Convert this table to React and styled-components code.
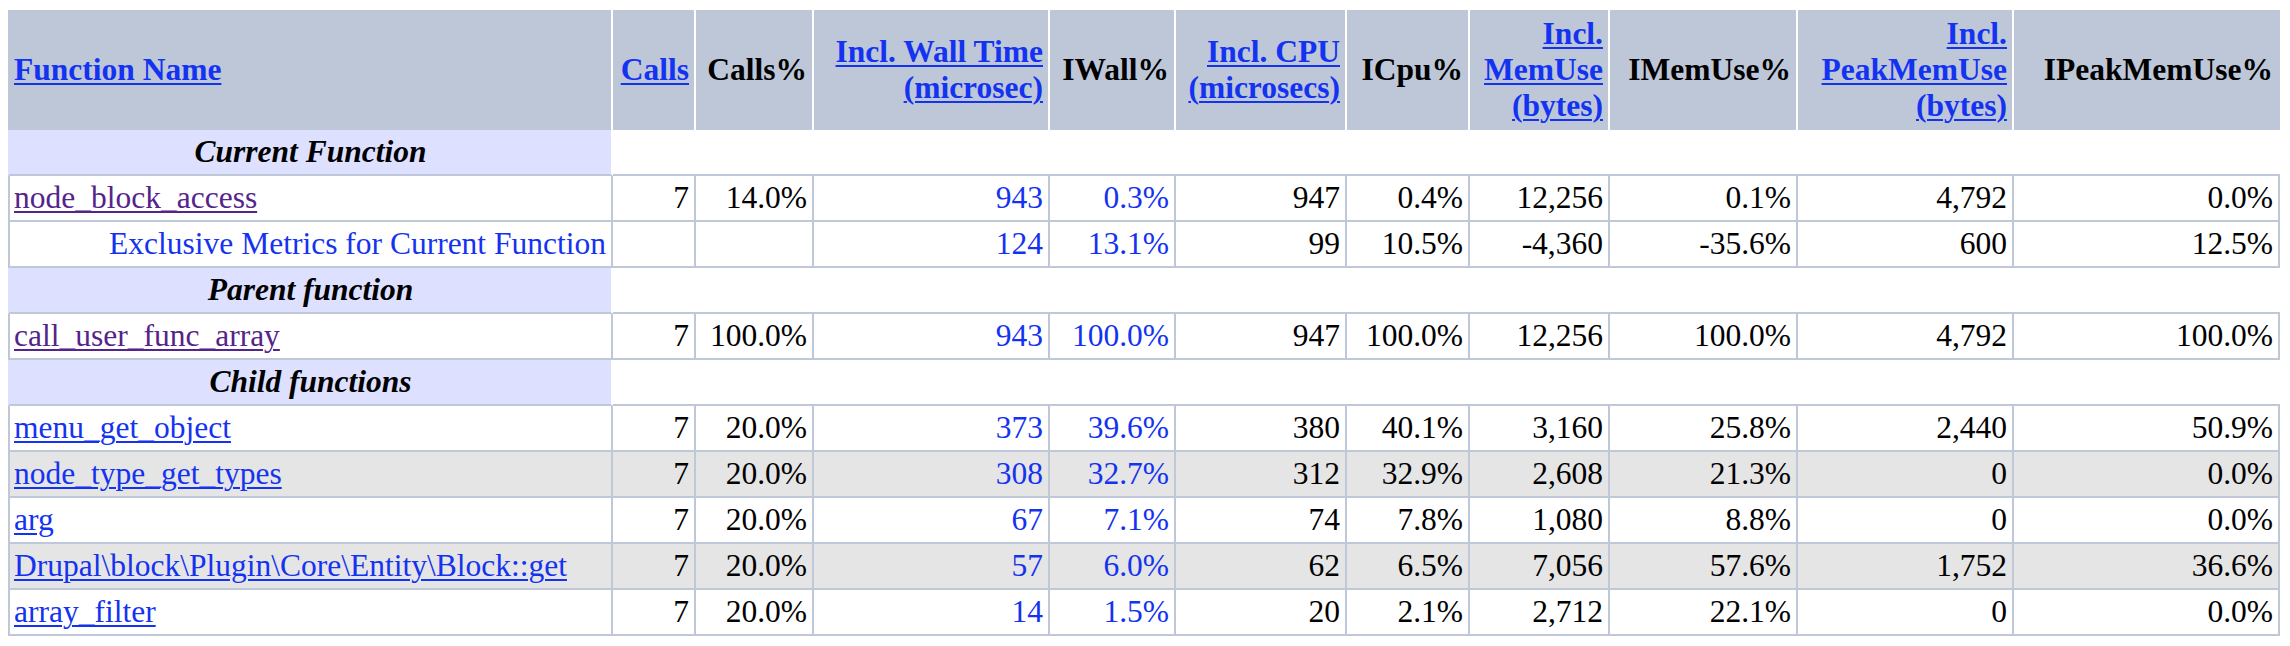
import React from 'react'
import styled, { createGlobalStyle } from 'styled-components'

const GlobalStyle = createGlobalStyle`
    body {
        margin: 0;
        background: #fff;
    }
`

const LINE = '#bfc8d9'
const HEAD = '#bdc7d8'
const SECTION = '#dde0ff'
const BLUE = '#1433f0'
const PURPLE = '#55248b'

const Table = styled.table`
    border-collapse: separate;
    border-spacing: 0;
    table-layout: fixed;
    width: 2272px;
    margin: 10px 0 0 8px;
    font-family: "Liberation Serif", "Times New Roman", serif;
    font-size: 31.5px;
    line-height: 36px;
    color: #000;
`

const HeadCell = styled.th`
    box-sizing: border-box;
    width: ${p => p.$w}px;
    height: 120px;
    padding: 4px 5px 4px 4px;
    background: ${HEAD};
    font-weight: bold;
    text-align: ${p => (p.$left ? 'left' : 'right')};
    vertical-align: middle;
    border-right: 2px solid ${p => (p.$last ? HEAD : '#fff')};
    &:first-child {
        border-left: 2px solid ${HEAD};
    }
`

const Link = styled.a`
    color: ${p => (p.$visited ? PURPLE : BLUE)};
    text-decoration: underline;
    text-decoration-thickness: 2px;
    text-underline-offset: 3px;
    cursor: pointer;
`

const Row = styled.tr`
    background: ${p => (p.$shaded ? '#e5e5e5' : '#fff')};
`

const Cell = styled.td`
    box-sizing: border-box;
    padding: 4px 5px 4px 4px;
    text-align: ${p => (p.$align || 'right')};
    color: ${p => (p.$blue ? BLUE : '#000')};
    white-space: nowrap;
    border-right: 2px solid ${LINE};
    border-bottom: 2px solid ${LINE};
    &:first-child {
        border-left: 2px solid ${LINE};
    }
`

const SectionCell = styled.td`
    padding: 4px;
    background: ${SECTION};
    text-align: center;
    font-weight: bold;
    font-style: italic;
    border-left: 2px solid ${SECTION};
    border-right: 2px solid #fff;
    border-bottom: 2px solid ${LINE};
`

const SectionRest = styled.td`
    background: #fff;
    border-bottom: 2px solid ${LINE};
`

const columns = [
    { label: 'Function Name', link: true, left: true, w: 605 },
    { label: 'Calls', link: true, w: 83 },
    { label: 'Calls%', w: 118 },
    { label: ['Incl. Wall Time', '(microsec)'], link: true, w: 236 },
    { label: 'IWall%', w: 126 },
    { label: ['Incl. CPU', '(microsecs)'], link: true, w: 171 },
    { label: 'ICpu%', w: 123 },
    { label: ['Incl.', 'MemUse', '(bytes)'], link: true, w: 140 },
    { label: 'IMemUse%', w: 188 },
    { label: ['Incl.', 'PeakMemUse', '(bytes)'], link: true, w: 216 },
    { label: 'IPeakMemUse%', w: 266 },
]

// columns 2 and 3 of the metrics (wall time) are printed in blue
const blueCols = [2, 3]

const current = {
    name: 'node_block_access',
    visited: true,
    values: ['7', '14.0%', '943', '0.3%', '947', '0.4%', '12,256', '0.1%', '4,792', '0.0%'],
}

const exclusive = ['', '', '124', '13.1%', '99', '10.5%', '-4,360', '-35.6%', '600', '12.5%']

const parents = [
    {
        name: 'call_user_func_array',
        visited: true,
        values: ['7', '100.0%', '943', '100.0%', '947', '100.0%', '12,256', '100.0%', '4,792', '100.0%'],
    },
]

const children = [
    { name: 'menu_get_object', values: ['7', '20.0%', '373', '39.6%', '380', '40.1%', '3,160', '25.8%', '2,440', '50.9%'] },
    { name: 'node_type_get_types', values: ['7', '20.0%', '308', '32.7%', '312', '32.9%', '2,608', '21.3%', '0', '0.0%'] },
    { name: 'arg', values: ['7', '20.0%', '67', '7.1%', '74', '7.8%', '1,080', '8.8%', '0', '0.0%'] },
    { name: 'Drupal\\block\\Plugin\\Core\\Entity\\Block::get', values: ['7', '20.0%', '57', '6.0%', '62', '6.5%', '7,056', '57.6%', '1,752', '36.6%'] },
    { name: 'array_filter', values: ['7', '20.0%', '14', '1.5%', '20', '2.1%', '2,712', '22.1%', '0', '0.0%'] },
]

const HeaderLabel = ({ label }) => {
    const lines = Array.isArray(label) ? label : [label]
    return lines.map((line, i) => (
        <React.Fragment key={i}>
            {i > 0 && <br />}
            {line}
        </React.Fragment>
    ))
}

const Section = ({ title }) => (
    <tr>
        <SectionCell>{title}</SectionCell>
        <SectionRest colSpan={10} />
    </tr>
)

const FuncRow = ({ fn, shaded }) => (
    <Row $shaded={shaded}>
        <Cell $align="left">
            <Link $visited={fn.visited}>{fn.name}</Link>
        </Cell>
        {fn.values.map((v, i) => (
            <Cell key={i} $blue={blueCols.includes(i)}>{v}</Cell>
        ))}
    </Row>
)

const App = () => {
    return (
        <>
            <GlobalStyle />
            <Table>
                <thead>
                    <tr>
                        {columns.map((c, i) => (
                            <HeadCell key={i} $w={c.w} $left={c.left} $last={i === columns.length - 1}>
                                {c.link ? (
                                    <Link><HeaderLabel label={c.label} /></Link>
                                ) : (
                                    <HeaderLabel label={c.label} />
                                )}
                            </HeadCell>
                        ))}
                    </tr>
                </thead>
                <tbody>
                    <Section title="Current Function" />
                    <FuncRow fn={current} />
                    <Row>
                        <Cell $blue>Exclusive Metrics for Current Function</Cell>
                        {exclusive.map((v, i) => (
                            <Cell key={i} $blue={blueCols.includes(i)}>{v}</Cell>
                        ))}
                    </Row>
                    <Section title="Parent function" />
                    {parents.map(fn => (
                        <FuncRow key={fn.name} fn={fn} />
                    ))}
                    <Section title="Child functions" />
                    {children.map((fn, i) => (
                        <FuncRow key={fn.name} fn={fn} shaded={i % 2 === 1} />
                    ))}
                </tbody>
            </Table>
        </>
    )
}

export default App
